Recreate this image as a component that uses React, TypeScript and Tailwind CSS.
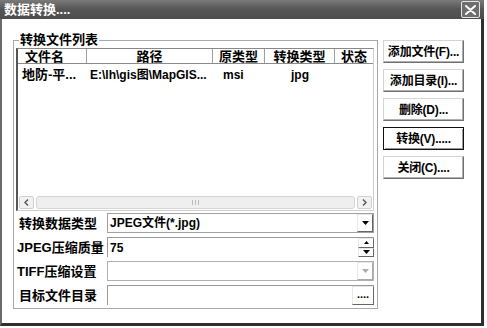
import React from "react";

const FONT = "font-['Liberation_Sans','Noto_Sans_CJK_SC',sans-serif]";

function DownTri({ color = "#000" }: { color?: string }) {
  return (
    <svg width="7" height="4" viewBox="0 0 7 4">
      <path d="M0 0h7L3.5 4z" fill={color} />
    </svg>
  );
}
function UpTri() {
  return (
    <svg width="5" height="3" viewBox="0 0 5 3">
      <path d="M0 3h5L2.5 0z" fill="#000" />
    </svg>
  );
}

function Btn({ label, focused = false }: { label: string; focused?: boolean }) {
  return (
    <div
      className={
        "h-[23px] w-[81px] flex items-center justify-center whitespace-nowrap text-[12px] tracking-[-0.2px] " +
        (focused
          ? "border border-[#111] shadow-[inset_1px_1px_0_#fff,inset_-1px_-1px_0_#999]"
          : "border border-t-[#d4d4d4] border-l-[#d4d4d4] border-r-[#707070] border-b-[#707070] shadow-[inset_-1px_-1px_0_#b0b0b0]")
      }
    >
      {label}
    </div>
  );
}

function SmallBtn({ children, className = "" }: { children: React.ReactNode; className?: string }) {
  return (
    <div
      className={
        "w-[16px] flex items-center justify-center border border-t-[#e8e8e8] border-l-[#e8e8e8] border-r-[#666] border-b-[#666] bg-white " +
        className
      }
    >
      {children}
    </div>
  );
}

export default function App() {
  return (
    <div className={"w-[487px] h-[328px] bg-white text-black font-bold " + FONT}>
      <div className="w-[484px] h-[326px] flex flex-col">
        {/* title bar */}
        <div className="h-[19px] shrink-0 flex items-center justify-between pl-[4px] pr-[4px] bg-gradient-to-b from-[#7a7a7a] via-[#555] to-[#4d4d4d]">
          <span className="text-white text-[13px] leading-none">数据转换....</span>
          <div className="w-[19px] h-[17px] rounded-[2px] border border-[#e6e6e6] bg-[#6e6e6e] flex items-center justify-center">
            <svg width="11" height="10" viewBox="0 0 11 10">
              <path d="M1 1L10 9M10 1L1 9" stroke="#fff" strokeWidth="2" strokeLinecap="round" />
            </svg>
          </div>
        </div>
        {/* body */}
        <div className="flex-1 flex border-l-2 border-l-[#6a6a6a] border-r-[3px] border-r-[#2e2e2e] border-b-[3px] border-b-[#2e2e2e] pl-[11px] pt-[21px]">
          {/* group box */}
          <div className="relative w-[365px] h-[269px] border border-[#a8a8a8] pl-[2px] pr-[3px] pt-[7px] pb-[3px] flex flex-col">
            <div className="absolute left-[5px] top-[-9px] px-[1px] bg-white text-[13px] leading-[16px]">转换文件列表</div>
            {/* list view */}
            <div className="h-[163px] shrink-0 flex flex-col border-l-2 border-l-[#555] border-t border-t-[#888] border-r border-r-[#cfcfcf] border-b border-b-[#cfcfcf]">
              <div className="h-[15px] shrink-0 flex border-b border-[#8a8a8a] text-[13px] leading-none">
                <div className="w-[69px] border-r border-[#a0a0a0] pl-[7px] flex items-center">文件名</div>
                <div className="w-[126px] border-r border-[#a0a0a0] flex items-center justify-center">路径</div>
                <div className="w-[52px] border-r border-[#a0a0a0] flex items-center justify-center">原类型</div>
                <div className="w-[70px] border-r border-[#a0a0a0] flex items-center justify-center">转换类型</div>
                <div className="flex-1 flex items-center justify-center">状态</div>
              </div>
              <div className="h-[21px] shrink-0 flex items-center text-[12px] leading-none">
                <div className="w-[69px] pl-[4px] text-[13px]">地防-平...</div>
                <div className="w-[126px] pl-[3px] whitespace-nowrap">E:\lh\gis图\MapGIS...</div>
                <div className="w-[52px] pl-[10px]">msi</div>
                <div className="w-[70px] text-center">jpg</div>
                <div className="flex-1"></div>
              </div>
              <div className="flex-1"></div>
              {/* scrollbar */}
              <div className="h-[14px] shrink-0 flex gap-[2px] pl-[1px] pr-[1px] pb-[1px]">
                <div className="w-[15px] rounded-[2px] border border-[#d0d0d0] bg-[#f1f1f1] flex items-center justify-center">
                  <svg width="5" height="7" viewBox="0 0 5 7"><path d="M4 0.5L1 3.5L4 6.5" stroke="#555" strokeWidth="1.4" fill="none" /></svg>
                </div>
                <div className="flex-1 rounded-[3px] border border-[#d4d4d4] bg-[#efefef] flex items-center justify-center">
                  <svg width="7" height="5" viewBox="0 0 7 5"><path d="M0.5 0v5M3.5 0v5M6.5 0v5" stroke="#bbb" strokeWidth="1" /></svg>
                </div>
                <div className="w-[15px] rounded-[2px] border border-[#d0d0d0] bg-[#f1f1f1] flex items-center justify-center">
                  <svg width="5" height="7" viewBox="0 0 5 7"><path d="M1 0.5L4 3.5L1 6.5" stroke="#555" strokeWidth="1.4" fill="none" /></svg>
                </div>
              </div>
            </div>
            {/* form rows */}
            <div className="mt-[2px] flex flex-col gap-[4px] text-[13px]">
              <div className="h-[20px] flex items-center">
                <div className="w-[91px] pl-[3px] leading-none">转换数据类型</div>
                <div className="flex-1 h-full flex border border-[#a0a0a0]">
                  <div className="flex-1 pl-[2px] flex items-center text-[12px] leading-none">JPEG文件(*.jpg)</div>
                  <SmallBtn><DownTri /></SmallBtn>
                </div>
              </div>
              <div className="h-[20px] flex items-center">
                <div className="w-[91px] pl-[1px] leading-none">JPEG压缩质量</div>
                <div className="flex-1 h-full flex border-t border-l border-[#999]">
                  <div className="flex-1 pl-[2px] flex items-center text-[12px] leading-none">75</div>
                  <div className="w-[16px] flex flex-col">
                    <SmallBtn className="flex-1"><UpTri /></SmallBtn>
                    <SmallBtn className="flex-1"><DownTri /></SmallBtn>
                  </div>
                </div>
              </div>
              <div className="h-[20px] flex items-center">
                <div className="w-[91px] pl-[1px] leading-none">TIFF压缩设置</div>
                <div className="flex-1 h-full flex border border-[#b0b0b0]">
                  <div className="flex-1"></div>
                  <SmallBtn className="border-r-[#aaa] border-b-[#aaa]"><DownTri color="#aaa" /></SmallBtn>
                </div>
              </div>
              <div className="h-[20px] flex items-center">
                <div className="w-[91px] pl-[3px] leading-none">目标文件目录</div>
                <div className="flex-1 h-full flex border-t border-l border-[#999]">
                  <div className="flex-1"></div>
                  <div className="w-[22px] flex items-end justify-center pb-[4px] border border-t-[#e8e8e8] border-l-[#e8e8e8] border-r-[#666] border-b-[#666] text-[11px] leading-none">....</div>
                </div>
              </div>
            </div>
          </div>
          {/* buttons */}
          <div className="ml-[5px] flex flex-col gap-[6px]">
            <Btn label="添加文件(F)..." />
            <Btn label="添加目录(I)..." />
            <Btn label="删除(D)..." />
            <Btn label="转换(V)....." focused />
            <Btn label="关闭(C)...." />
          </div>
        </div>
      </div>
    </div>
  );
}
